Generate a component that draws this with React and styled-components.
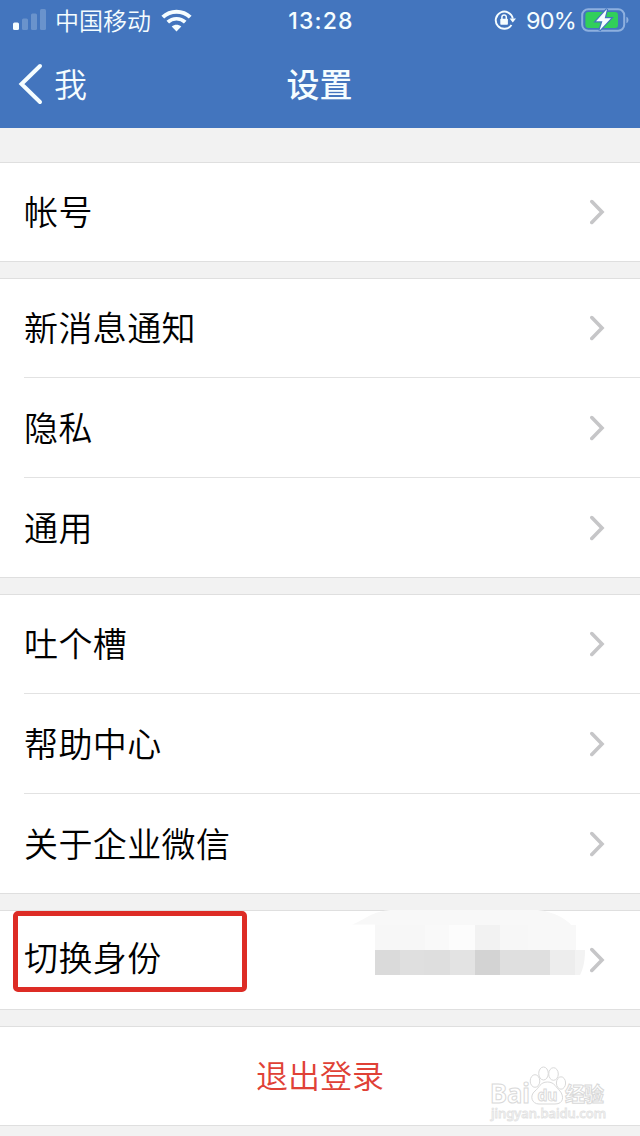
import React from 'react';
import styled, { createGlobalStyle, css } from 'styled-components';

const GlobalStyle = createGlobalStyle`
  * {
    box-sizing: border-box;
  }

  body {
    margin: 0;
    background: #f2f2f2;
    font-family: 'Noto Sans CJK SC', sans-serif;
  }
`;

const Screen = styled.main`
  position: relative;
  width: 640px;
  height: 1136px;
  overflow: hidden;
  background: #f2f2f2;
`;

const Header = styled.header`
  height: 128px;
  background: #4375be;
  color: #f5fdff;
`;

const StatusBar = styled.div`
  display: grid;
  grid-template-columns: 1fr auto 1fr;
  align-items: center;
  height: 40px;
  padding: 0 11px 0 13px;
`;

const StatusSide = styled.div`
  display: flex;
  align-items: center;
  justify-content: ${({ $end }) => ($end ? 'flex-end' : 'flex-start')};

  svg {
    display: block;
    flex: none;
  }
`;

const Carrier = styled.span`
  margin: 0 10px 0 8px;
  font-size: 24px;
  font-weight: 350;
  line-height: 40px;
`;

const Clock = styled.span`
  padding-top: 2px;
  font-family: Inter, sans-serif;
  font-size: 23px;
  font-weight: 500;
  letter-spacing: 1.2px;
  line-height: 38px;
`;

const Percent = styled.span`
  margin: 0 5px 0 10px;
  padding-top: 2px;
  font-family: Inter, sans-serif;
  font-size: 23.5px;
  letter-spacing: -0.8px;
  line-height: 38px;
`;

const NavBar = styled.nav`
  display: grid;
  grid-template-columns: 1fr auto 1fr;
  align-items: center;
  height: 88px;
  padding: 0 19px 0 18px;
`;

const Back = styled.a`
  display: flex;
  align-items: center;
  gap: 11px;
  font-size: 33px;
  font-weight: 350;
`;

const BackLabel = styled.span`
  padding-bottom: 2px;
  line-height: 86px;
`;

const Title = styled.h1`
  margin: 0;
  padding-bottom: 2px;
  font-size: 33px;
  font-weight: 500;
  line-height: 86px;
`;

const List = styled.div`
  display: flex;
  flex-direction: column;
  gap: 16px;
  padding-top: 34px;
`;

const Group = styled.section`
  background: #fff;
  box-shadow: inset 0 1px #dfdfdf, inset 0 -1px #dfdfdf;
`;

const Row = styled.div`
  display: flex;
  align-items: center;
  justify-content: space-between;
  height: 100px;
  margin-left: 24px;
  padding-right: 34px;
  color: #000;
  font-size: 34px;
  font-weight: 350;
  letter-spacing: 0.4px;

  &:not(:last-child) {
    border-bottom: 1px solid #e2e2e2;
  }
`;

const Label = styled.span`
  padding-bottom: ${({ $raised }) => ($raised ? '6px' : '2px')};
  line-height: 50px;
`;

const Logout = styled.div`
  height: 100px;
  color: #e04136;
  font-size: 32px;
  font-weight: 350;
  line-height: 97px;
  text-align: center;
`;

const overlay = css`
  position: absolute;
  display: block;
  pointer-events: none;
`;

const Highlight = styled.div`
  ${overlay}
  top: 911px;
  left: 13px;
  width: 234px;
  height: 81px;
  border: 5px solid #dd2c25;
  border-radius: 5px;
`;

const Mosaic = styled.svg`
  ${overlay}
  top: 908px;
  left: 350px;
`;

const Watermark = styled.svg`
  ${overlay}
  top: 1060px;
  left: 486px;
`;

const groups = [
  [{ label: '帐号' }],
  [{ label: '新消息通知' }, { label: '隐私' }, { label: '通用' }],
  [{ label: '吐个槽' }, { label: '帮助中心' }, { label: '关于企业微信' }],
  [{ label: '切换身份', raised: true }],
];

const tiles = [
  { x: 25, y: 17, w: 50, fill: '#f7f7f7' },
  { x: 75, y: 17, w: 24, fill: '#f9f9f9' },
  { x: 99, y: 17, w: 26, fill: '#fcfcfc' },
  { x: 125, y: 17, w: 25, fill: '#f2f2f2' },
  { x: 150, y: 17, w: 28, fill: '#f7f7f7' },
  { x: 178, y: 17, w: 48, fill: '#f8f8f8' },
  { x: 25, y: 42, w: 25, fill: '#dadada' },
  { x: 50, y: 42, w: 24, fill: '#dfdfdf' },
  { x: 74, y: 42, w: 26, fill: '#dedede' },
  { x: 100, y: 42, w: 25, fill: '#e3e3e3' },
  { x: 125, y: 42, w: 25, fill: '#d3d3d3' },
  { x: 150, y: 42, w: 50, fill: '#dfdfdf' },
  { x: 200, y: 42, w: 25, fill: '#ededed' },
];

const SignalIcon = () => (
  <svg width="34" height="22" viewBox="0 0 34 22" fill="#f5fdff">
    <rect x="0" y="13.5" width="6" height="7.5" rx="1.5" />
    <g opacity="0.22">
      <rect x="9" y="9.5" width="6" height="11.5" rx="1.5" />
      <rect x="18" y="4.5" width="6" height="16.5" rx="1.5" />
      <rect x="27" y="0" width="6" height="21" rx="1.5" />
    </g>
  </svg>
);

const WifiIcon = () => (
  <svg width="31" height="23" viewBox="0 0 31 23" fill="none" stroke="#f5fdff">
    <path d="M1.8 8.2C9.3.8 21.7.8 29.2 8.2" strokeWidth="4" />
    <path d="M6.8 13.2C11.6 8.6 19.4 8.6 24.2 13.2" strokeWidth="3.7" />
    <path d="M10.7 17.6C13.5 15 17.5 15 20.3 17.6L15.5 22.4Z" fill="#f5fdff" stroke="none" />
  </svg>
);

const LockIcon = () => (
  <svg width="22" height="22" viewBox="0 0 22 22" fill="none" stroke="#f5fdff" strokeWidth="1.9">
    <path d="M17.5 16A8.6 8.6 0 1 1 18.8 9.6" />
    <path d="M15.6 9.6H22L18.8 13.4Z" fill="#f5fdff" stroke="none" />
    <rect x="6.3" y="9.8" width="7.6" height="6" rx="0.7" fill="#f5fdff" stroke="none" />
    <path d="M7.9 10.3V8.1a2.2 2.2 0 0 1 4.4 0v2.2" strokeWidth="1.5" />
  </svg>
);

const BatteryIcon = () => (
  <svg width="48" height="24" viewBox="0 0 48 24" fill="none">
    <rect x="1.2" y="1.2" width="42" height="21.5" rx="6" stroke="#8eb0df" strokeWidth="2" />
    <rect x="4.4" y="4" width="32.6" height="16" rx="3" fill="#31cf5a" />
    <path d="M45.4 8.7c2.7 1 2.7 5.5 0 6.5Z" fill="#8eb0df" />
    <path
      d="M26 1 15 13.2h6.4L18.5 22.5 30 10.2h-6.3Z"
      fill="#f5fdff"
      stroke="#4375be"
      strokeWidth="2.4"
      paintOrder="stroke"
    />
  </svg>
);

const BackIcon = () => (
  <svg width="25" height="42" viewBox="0 0 25 42" fill="none" stroke="#f5fdff" strokeWidth="4">
    <path d="M22 3 3.5 21 22 39" strokeLinecap="round" />
  </svg>
);

const Chevron = () => (
  <svg width="16" height="26" viewBox="0 0 16 26" fill="none" stroke="#c6c6c8" strokeWidth="3.6">
    <path d="M1.8 2.6 12 13 1.8 23.4" strokeLinecap="round" />
  </svg>
);

const BlurredName = () => (
  <Mosaic width="240" height="70" viewBox="0 0 240 70">
    <path
      d="M2 16.5C13 13 20 4 40 2H188C206 4 224 14 226 26V42H25V16.5Z"
      fill="#f8f8f8"
    />
    {tiles.map(({ x, y, w, fill }) => (
      <rect key={`${x}-${y}`} x={x} y={y} width={w} height="25" fill={fill} />
    ))}
    <path d="M225 42H235C235 54 233 61 230 67H225Z" fill="#f3f3f3" />
  </Mosaic>
);

const BaiduMark = () => (
  <Watermark
    width="130"
    height="64"
    viewBox="0 0 130 64"
    fill="#fff"
    stroke="#d9d9d9"
    strokeWidth="1"
    fontFamily="'Noto Sans', 'Noto Sans CJK SC', sans-serif"
    fontWeight="700"
  >
    <text x="4" y="43" fontSize="26" textLength="40" lengthAdjust="spacingAndGlyphs">Bai</text>
    <ellipse cx="49" cy="21" rx="4.8" ry="6.3" />
    <ellipse cx="57.5" cy="13.5" rx="4.8" ry="6.5" />
    <ellipse cx="67.5" cy="14" rx="4.8" ry="6.3" />
    <ellipse cx="75" cy="23" rx="4.6" ry="6.2" />
    <path d="M61.5 22C54 22 53 28 49 31C43 36 46 44 53 44H69C78 44 78 36 74 31C70 28 69 22 61.5 22Z" />
    <text x="51.5" y="40.5" fontSize="16" textLength="20" lengthAdjust="spacingAndGlyphs">du</text>
    <text x="79" y="42" fontSize="20" textLength="39">经验</text>
    <text
      x="5"
      y="58"
      fontSize="12"
      fontWeight="500"
      strokeWidth="0.8"
      stroke="#e2e2e2"
      textLength="115"
      lengthAdjust="spacingAndGlyphs"
    >
      jingyan.baidu.com
    </text>
  </Watermark>
);

export default function App() {
  return (
    <Screen>
      <GlobalStyle />
      <Header>
        <StatusBar>
          <StatusSide>
            <SignalIcon />
            <Carrier>中国移动</Carrier>
            <WifiIcon />
          </StatusSide>
          <Clock>13:28</Clock>
          <StatusSide $end>
            <LockIcon />
            <Percent>90%</Percent>
            <BatteryIcon />
          </StatusSide>
        </StatusBar>
        <NavBar>
          <Back>
            <BackIcon />
            <BackLabel>我</BackLabel>
          </Back>
          <Title>设置</Title>
        </NavBar>
      </Header>
      <List>
        {groups.map(rows => (
          <Group key={rows[0].label}>
            {rows.map(({ label, raised }) => (
              <Row key={label}>
                <Label $raised={raised}>{label}</Label>
                <Chevron />
              </Row>
            ))}
          </Group>
        ))}
        <Group>
          <Logout>退出登录</Logout>
        </Group>
      </List>
      <BlurredName />
      <Highlight />
      <BaiduMark />
    </Screen>
  );
}
